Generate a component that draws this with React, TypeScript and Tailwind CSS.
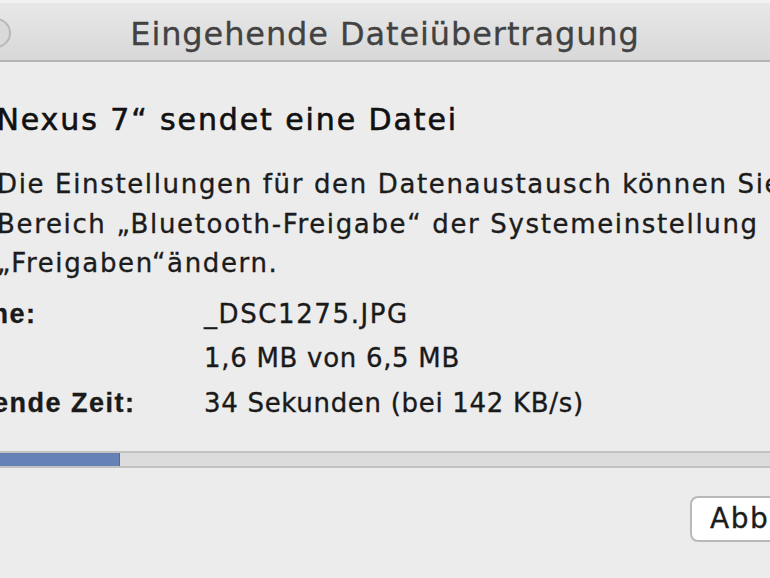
export default function App() {
  const font = { fontFamily: '"DejaVu Sans", "Liberation Sans", Arial, sans-serif' };
  const progress = 120;

  return (
    <div
      className="w-[770px] h-[578px] overflow-hidden bg-[#ececec] text-[#1a1a1a]"
      style={font}
    >
      {/* title bar */}
      <div className="relative h-[62px] border-t-[3px] border-t-[#f2f2f2] border-b-2 border-b-[#b4b4b4] bg-gradient-to-b from-[#e8e8e8] to-[#d8d8d8] flex items-center justify-center">
        <div className="absolute left-[-19px] top-[15px] w-[30px] h-[30px] rounded-full bg-[#d9d9d9] border-2 border-[#b8b8b8]" />
        <span className="text-[32px] leading-none text-[#424242] tracking-[0.9px] pt-[4px] [-webkit-text-stroke:0.3px_#424242]">
          Eingehende Dateiübertragung
        </span>
      </div>

      {/* content */}
      <div className="-ml-[3px] pt-[39px]">
        <h1 className="-ml-[18px] text-[30px] leading-[38px] whitespace-nowrap text-[#111] tracking-[1.9px] [-webkit-text-stroke:0.6px_#111]">
          „Nexus 7“ sendet eine Datei
        </h1>

        <p className="mt-[26px] text-[26px] leading-[39.5px] whitespace-nowrap text-[#1c1c1c] tracking-[1.65px] [-webkit-text-stroke:0.35px_#1c1c1c]">
          Die Einstellungen für den Datenaustausch können Sie im
          <br />
          Bereich „Bluetooth-Freigabe“ der Systemeinstellung
          <br />
          „Freigaben“ändern.
        </p>

        <div className="-ml-[121px] mt-[14px] grid grid-cols-[328px_1fr] gap-y-[12.5px] text-[26px] leading-[32px] whitespace-nowrap tracking-[0.7px] [-webkit-text-stroke:0.35px_#1c1c1c]">
          <span className="font-bold font-['Liberation_Sans'] text-[27px] tracking-[1.5px]">Dateiname:</span>
          <span className="tracking-[1.6px]">_DSC1275.JPG</span>
          <span className="font-bold font-['Liberation_Sans'] text-[27px] tracking-[1.5px]">Größe:</span>
          <span>1,6 MB von 6,5 MB</span>
          <span className="font-bold font-['Liberation_Sans'] text-[27px] tracking-[1.5px]">Verbleibende Zeit:</span>
          <span>34 Sekunden (bei 142 KB/s)</span>
        </div>
      </div>

      {/* progress */}
      <div className="mt-[32px] h-[17px] w-[800px] bg-[#dcdcdc] border-y-2 border-y-[#c2c2c2] flex">
        <div className="h-full bg-[#6581b6] border-r border-r-[#4f6a9c]" style={{ width: progress }} />
      </div>

      {/* button */}
      <div className="mt-[28px] flex justify-end -mr-[110px]">
        <button className="w-[190px] h-[46px] rounded-[8px] bg-white border-2 border-[#b9b9b9] text-[28px] tracking-[1.5px] text-left pl-[18px] text-[#1c1c1c] [-webkit-text-stroke:0.35px_#1c1c1c]">
          Abbrechen
        </button>
      </div>
    </div>
  );
}
